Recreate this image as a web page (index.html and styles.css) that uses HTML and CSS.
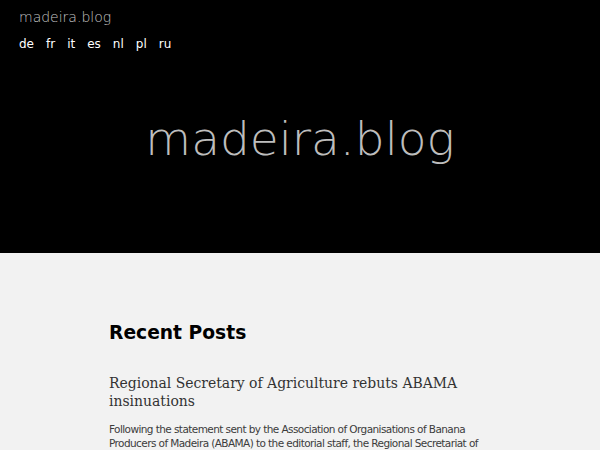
FILE: index.html
```html
<!DOCTYPE html>
<html>
<head>
<meta charset="utf-8">
<link rel="stylesheet" href="styles.css">
</head>
<body>
<header class="hero">
  <div class="site-name">madeira.blog</div>
  <nav class="langs">
    <a href="#">de</a><a href="#">fr</a><a href="#">it</a><a href="#">es</a><a href="#">nl</a><a href="#">pl</a><a href="#">ru</a>
  </nav>
  <h1 class="big-title">madeira.blog</h1>
</header>
<main class="content">
  <h2 class="section-title">Recent Posts</h2>
  <article class="post">
    <h3 class="post-title">Regional Secretary of Agriculture rebuts ABAMA insinuations</h3>
    <p class="post-excerpt">Following the statement sent by the Association of Organisations of Banana Producers of Madeira (ABAMA) to the editorial staff, the Regional Secretariat of Agriculture and Rural Development has responded.</p>
  </article>
</main>
</body>
</html>
```
FILE: styles.css
```css
html, body {
  margin: 0;
  padding: 0;
}
body {
  background: #f2f2f2;
  font-family: "DejaVu Sans", sans-serif;
  overflow: hidden;
  height: 450px;
}
.hero {
  background: #000;
  height: 253px;
  padding: 8px 19px 0;
  box-sizing: border-box;
  display: flex;
  flex-direction: column;
}
.site-name {
  color: #c4c4c4;
  font-weight: 200;
  font-size: 14px;
  line-height: 18px;
}
.langs {
  margin-top: 11px;
  display: flex;
  gap: 12px;
}
.langs a {
  color: #fff;
  text-decoration: none;
  font-size: 12px;
  line-height: 15px;
}
.big-title {
  margin: 59px 0 0;
  text-align: center;
  color: #bdbdbd;
  font-weight: 200;
  font-size: 47px;
  line-height: 56px;
}
.content {
  width: 382px;
  margin: 0 auto;
  padding-top: 68px;
}
.section-title {
  margin: 0;
  font-size: 18.7px;
  line-height: 24px;
  color: #000;
}
.post-title {
  margin: 29px 0 0;
  font-family: "DejaVu Serif Condensed", "DejaVu Serif", serif;
  font-stretch: condensed;
  font-weight: normal;
  font-size: 15.5px;
  line-height: 18px;
  color: #333;
}
.post-excerpt {
  margin: 12px 0 0;
  font-size: 10.5px;
  letter-spacing: -0.58px;
  line-height: 14px;
  color: #3c3c3c;
}
```
